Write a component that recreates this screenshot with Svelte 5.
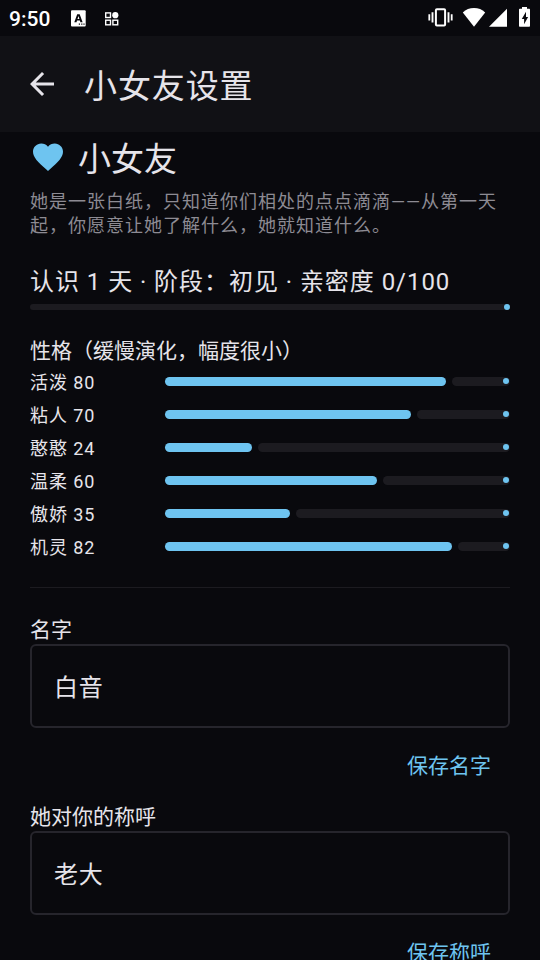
<script>
  const traits = [
    { name: '活泼', value: 80 },
    { name: '粘人', value: 70 },
    { name: '憨憨', value: 24 },
    { name: '温柔', value: 60 },
    { name: '傲娇', value: 35 },
    { name: '机灵', value: 82 }
  ];
  const fields = [
    { label: '名字', value: '白音', action: '保存名字' },
    { label: '她对你的称呼', value: '老大', action: '保存称呼' }
  ];
</script>

<div class="screen">
  <div class="status">
    <span class="clock">9:50</span>
    <svg class="lang" width="15" height="17" viewBox="0 0 15 17">
      <rect x="0" y="0.3" width="14.7" height="16.2" rx="1" fill="#fff" />
      <path fill-rule="evenodd" d="M3.300 12.200 6.200 4.200h2.500l2.900 8H9.400l-.500-1.600H6l-.500 1.600zM6.500 9h1.900l-.950-2.900z" fill="#09090d" />
      <path d="M7.800 14.2h1.200M10.2 14.2h1.200M12.400 14.2h1.200" stroke="#09090d" stroke-width="1.2" />
    </svg>
    <svg class="apps" width="14" height="14" viewBox="0 0 14 14">
      <g fill="none" stroke="#fff" stroke-width="1.4">
        <rect x="0.7" y="0.9" width="4.8" height="4.6" />
        <rect x="0.7" y="8.2" width="4.8" height="4.6" />
        <rect x="7.900" y="8.2" width="4.8" height="4.6" />
      </g>
      <circle cx="10.3" cy="3.2" r="3.1" fill="#fff" />
    </svg>
    <svg class="system" width="104" height="24" viewBox="428 6 104 24">
      <g fill="none" stroke="#fff">
        <rect x="435.9" y="9.2" width="9.2" height="16.2" rx="1" stroke-width="2" />
        <path d="M432.5 12.2v10.4M448.5 12.2v10.4" stroke-width="1.9" />
        <path d="M429.3 14.2v6.4M451.7 14.2v6.4" stroke-width="1.8" />
      </g>
      <g fill="#fff">
        <path d="M474 26.8 462.8 12.6C465.8 9.4 469.7 8 474 8s8.200 1.400 11.200 4.600z" />
        <path d="M507 8.800V26.800H489z" />
        <path d="M522 7h5v1.700h2c.600 0 1 .400 1 1v16.100c0 .600-.400 1-1 1h-9c-.600 0-1-.400-1-1V9.700c0-.600.400-1 1-1h2z" />
      </g>
      <path d="M526 11.800 521.800 18.900h2.300v5.300l4-7.100h-2.100z" fill="#09090d" />
    </svg>
  </div>

  <header>
    <svg width="36" height="36" viewBox="0 0 24 24"><path d="M20 11H7.830l5.590-5.590L12 4l-8 8 8 8 1.410-1.410L7.830 13H20z" fill="#e6e4ea" /></svg>
    <h1>小女友设置</h1>
  </header>

  <main>
    <div class="hero">
      <svg width="36" height="36" viewBox="0 0 24 24"><path d="M12 21.350l-1.450-1.320C5.400 15.360 2 12.280 2 8.500 2 5.420 4.420 3 7.500 3c1.740 0 3.410.810 4.500 2.090C13.090 3.810 14.760 3 16.500 3 19.580 3 22 5.420 22 8.500c0 3.780-3.400 6.860-8.550 11.540z" fill="#6ec4f0" /></svg>
      <h2>小女友</h2>
    </div>
    <p class="about">她是一张白纸，只知道你们相处的点点滴滴——从第一天<br />起，你愿意让她了解什么，她就知道什么。</p>
    <p class="stage">认识 1 天 · 阶段：初见 · 亲密度 0/100</p>
    <div class="intimacy"><i></i></div>

    <h3>性格（缓慢演化，幅度很小）</h3>
    {#each traits as trait}
      <div class="trait">
        <span>{trait.name} {trait.value}</span>
        <div class="meter">
          <div class="fill" style:width="{trait.value * 3.45 + 4.5}px"></div>
          <div class="rest"><i></i></div>
        </div>
      </div>
    {/each}

    <hr />

    {#each fields as field}
      <section>
        <h3>{field.label}</h3>
        <div class="input">{field.value}</div>
        <div class="actions"><button>{field.action}</button></div>
      </section>
    {/each}
  </main>
</div>

<style>
  :global(body) { background: #09090d; }
  .screen {
    width: 540px;
    height: 960px;
    overflow: hidden;
    background: #09090d;
    color: #e6e4ea;
    font-family: Roboto, "Noto Sans CJK SC", sans-serif;
  }
  h1, h2, h3, p { margin: 0; font-weight: 400; white-space: nowrap; }
  svg { display: block; flex: none; }
  .status { height: 36px; display: flex; align-items: center; padding: 0 8px 0 9px; }
  .clock { width: 62px; font-size: 21px; font-weight: 500; line-height: 36px; color: #fff; padding-top: 2px; }
  .lang { margin-top: 1px; }
  .apps { margin-left: 19px; margin-top: 1px; }
  .system { margin-left: auto; }
  header { height: 96px; display: flex; align-items: center; padding-left: 24px; background: #111115; }
  h1 { margin-left: 24px; padding-top: 6px; font-size: 33px; line-height: 48px; letter-spacing: 0.9px; }
  main { padding: 0 30px; }
  .hero { height: 50px; display: flex; align-items: center; }
  h2 { margin-left: 12px; padding-top: 6px; font-size: 33px; line-height: 44px; }
  .about { margin-top: 8px; font-size: 18px; line-height: 24px; letter-spacing: 1px; color: #8d8b93; }
  .stage { margin-top: 26px; font-size: 24px; line-height: 36px; letter-spacing: 0.95px; }
  .intimacy { height: 6px; margin: 4px 0 26px; border-radius: 3px; background: #1c1b20; display: flex; justify-content: flex-end; }
  i { width: 6px; height: 6px; border-radius: 50%; background: #6ec4f0; }
  h3 { font-size: 21px; line-height: 30px; }
  .trait { height: 33px; display: flex; align-items: center; font-size: 18px; letter-spacing: 0.9px; }
  .trait span { width: 135px; line-height: 24px; }
  .meter { width: 345px; height: 9px; margin-bottom: 2px; display: flex; gap: 6px; }
  .fill { flex: none; border-radius: 5px; background: #6ec4f0; }
  .rest { flex: 1; border-radius: 5px; background: #1c1b20; display: flex; align-items: center; justify-content: flex-end; padding-right: 1.5px; }
  .rest i { margin-bottom: 1px; }
  hr { height: 1px; margin: 23px 0 26.5px; border: 0; background: #1c1b20; }
  section { height: 187px; }
  section h3 { height: 29px; }
  .input {
    height: 84px;
    box-sizing: border-box;
    border: 2px solid #26252c;
    border-radius: 6px;
    padding: 0 22px;
    font-size: 24px;
    line-height: 84px;
    letter-spacing: 0.75px;
  }
  .actions { display: flex; justify-content: flex-end; padding-top: 8px; }
  button {
    height: 60px;
    border: 0;
    padding: 0 19px;
    background: none;
    color: #6ec4f0;
    font: 400 21px/60px Roboto, "Noto Sans CJK SC", sans-serif;
  }
</style>
